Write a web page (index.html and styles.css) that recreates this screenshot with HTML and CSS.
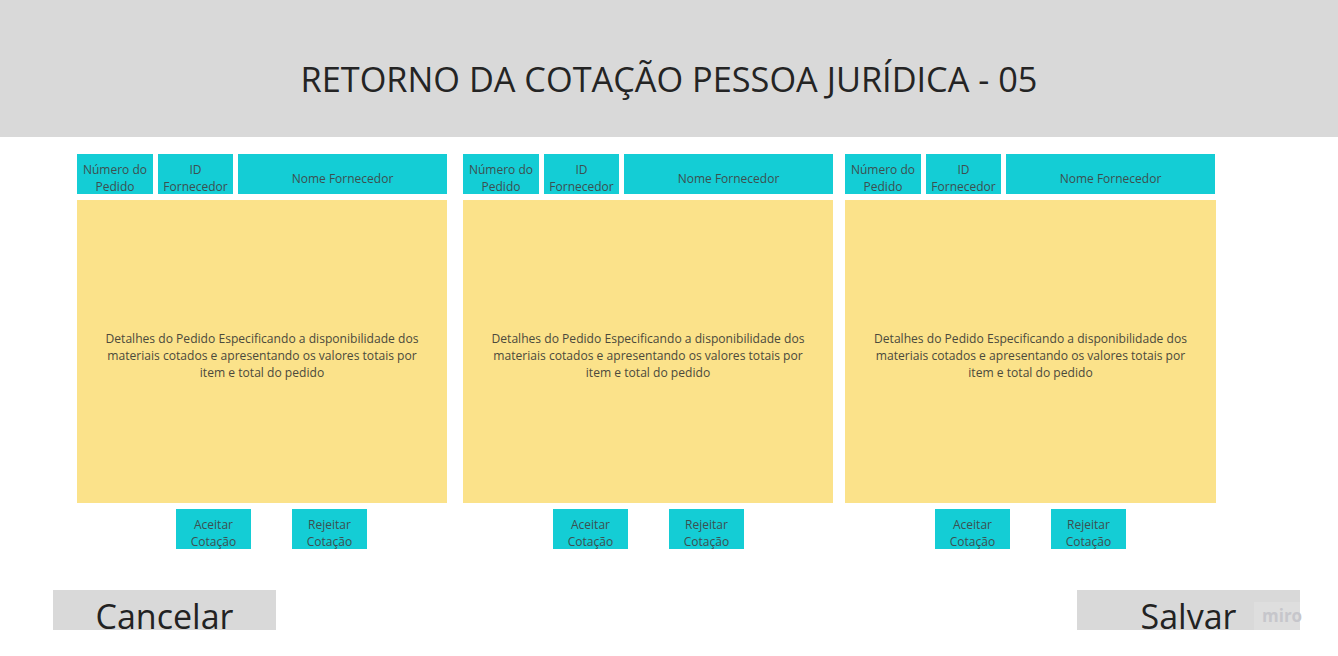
FILE: index.html
```html
<!DOCTYPE html>
<html lang="pt">
<head>
<meta charset="utf-8">
<title>Retorno da Cotação Pessoa Jurídica - 05</title>
<link rel="stylesheet" href="styles.css">
</head>
<body>
<header class="top">
  <h1 class="title">RETORNO DA COTAÇÃO PESSOA JURÍDICA - 05</h1>
</header>
<main class="board">
  <section class="col col-a">
    <div class="cells">
      <div class="cell c-num">Número do Pedido</div>
      <div class="cell c-id">ID Fornecedor</div>
      <div class="cell c-name">Nome Fornecedor</div>
    </div>
    <div class="details">Detalhes do Pedido Especificando a disponibilidade dos materiais cotados e apresentando os valores totais por item e total do pedido</div>
    <div class="actions first">
      <div class="btn">Aceitar Cotação</div>
      <div class="btn">Rejeitar Cotação</div>
    </div>
  </section>
  <section class="col col-b">
    <div class="cells">
      <div class="cell c-num">Número do Pedido</div>
      <div class="cell c-id">ID Fornecedor</div>
      <div class="cell c-name">Nome Fornecedor</div>
    </div>
    <div class="details">Detalhes do Pedido Especificando a disponibilidade dos materiais cotados e apresentando os valores totais por item e total do pedido</div>
    <div class="actions">
      <div class="btn">Aceitar Cotação</div>
      <div class="btn">Rejeitar Cotação</div>
    </div>
  </section>
  <section class="col col-c">
    <div class="cells">
      <div class="cell c-num">Número do Pedido</div>
      <div class="cell c-id">ID Fornecedor</div>
      <div class="cell c-name">Nome Fornecedor</div>
    </div>
    <div class="details">Detalhes do Pedido Especificando a disponibilidade dos materiais cotados e apresentando os valores totais por item e total do pedido</div>
    <div class="actions">
      <div class="btn">Aceitar Cotação</div>
      <div class="btn">Rejeitar Cotação</div>
    </div>
  </section>
</main>
<footer class="bottom">
  <div class="big-btn">Cancelar</div>
  <div class="big-btn save">Salvar<span class="miro">miro</span></div>
</footer>
</body>
</html>
```
FILE: styles.css
```css
* { box-sizing: border-box; }
html, body { margin: 0; padding: 0; }
body {
  width: 1338px;
  height: 656px;
  overflow: hidden;
  background: #ffffff;
  font-family: "Open Sans", "Noto Sans", sans-serif;
  color: #2b2b2b;
}
.top {
  height: 137px;
  background: #d9d9d9;
  display: flex;
  align-items: center;
  justify-content: center;
  padding-top: 20px;
}
.title {
  margin: 0;
  font-weight: 400;
  font-size: 34.3px;
  color: #242424;
}
.board {
  display: grid;
  grid-template-columns: 370px 16px 370px 12px 371px;
  padding: 17px 0 0 77px;
}
.col-a { grid-column: 1; }
.col-b { grid-column: 3; }
.col-c { grid-column: 5; }
.cells {
  display: flex;
  gap: 5px;
  height: 40px;
}
.cell {
  background: #14cdd5;
  color: #3d4f50;
  font-size: 12px;
  line-height: 17px;
  display: flex;
  align-items: center;
  justify-content: center;
  text-align: center;
  padding-top: 8px;
}
.c-num { width: 76px; }
.c-id { width: 75px; }
.c-name { width: 209px; }
.details {
  margin-top: 6px;
  height: 303px;
  background: #fbe28a;
  color: #4b4a3c;
  font-size: 12.1px;
  line-height: 17px;
  display: flex;
  align-items: center;
  justify-content: center;
  text-align: center;
  padding: 7px 25px 0;
}
.actions {
  display: flex;
  gap: 41px;
  margin-top: 6px;
  padding-left: 90px;
}
.actions.first { padding-left: 99px; }
.btn {
  width: 75px;
  height: 40px;
  background: #14cdd5;
  color: #3d4f50;
  font-size: 12px;
  line-height: 17px;
  display: flex;
  align-items: center;
  justify-content: center;
  text-align: center;
  padding-top: 8px;
}
.bottom {
  display: flex;
  justify-content: space-between;
  padding: 41px 38px 0 53px;
}
.big-btn {
  position: relative;
  width: 223px;
  height: 40px;
  background: #d9d9d9;
  color: #222222;
  font-size: 34px;
  line-height: 34px;
  text-align: center;
  padding-top: 9px;
}
.miro {
  position: absolute;
  right: 0;
  top: 12px;
  width: 46px;
  height: 28px;
  background: #dedede;
  color: #c6c6cb;
  font-size: 17px;
  line-height: 28px;
  font-weight: 700;
  padding-left: 8px;
  text-align: left;
  white-space: nowrap;
}
```
